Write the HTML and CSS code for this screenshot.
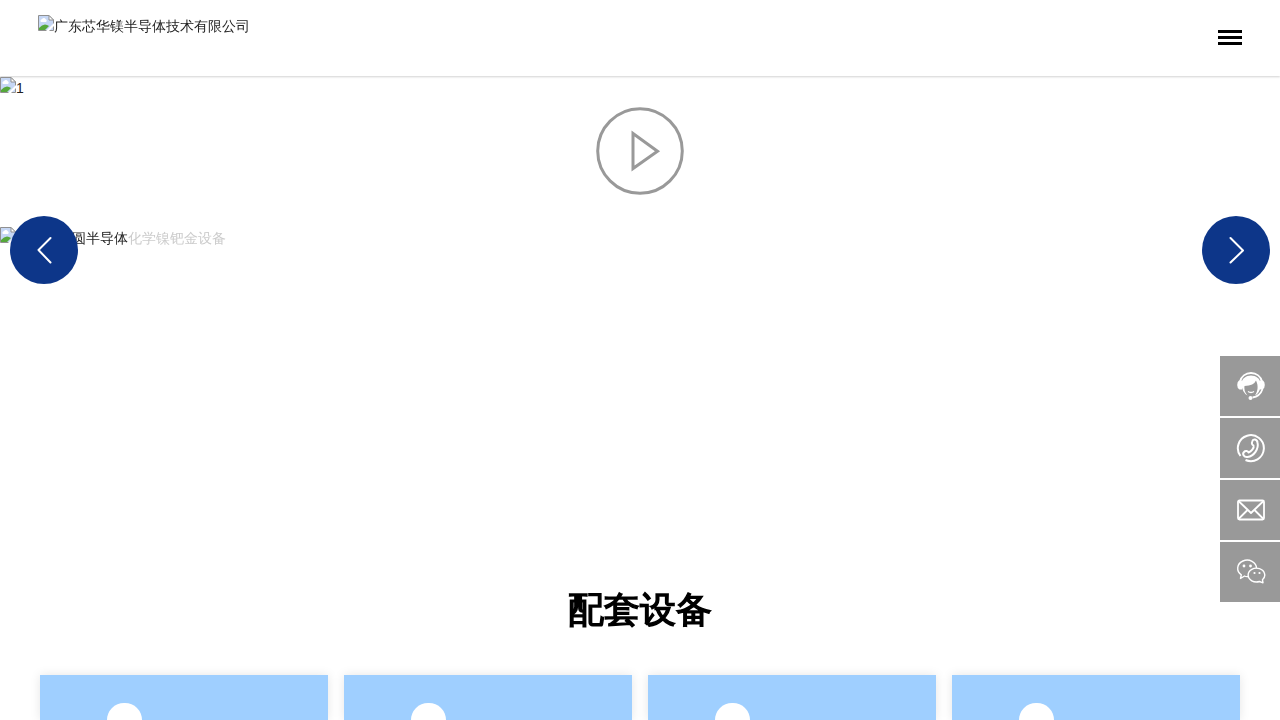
FILE: index.html
```
<!DOCTYPE html>
<html lang="zh-CN">
<head>
    <meta charset="UTF-8">
    <meta name="viewport" content="width=device-width, initial-scale=1.0">
    <title>广东芯华镁半导体技术有限公司</title>
    <link rel="stylesheet" href="styles.css">
</head>
<body>
    <!-- 图片占位图标 -->
    <svg class="symbols">
        <symbol id="noimg" viewBox="0 0 16 16">
            <path d="M.5 .5H11L15.500 5V15.500H.5Z" fill="#c6d7f5" stroke="#909090"/>
            <path d="M11 .5V5H15.500Z" fill="#fff" stroke="#909090"/>
            <path d="M3 7a1.500 1.500 0 0 1 1-2.700 2 2 0 0 1 3.700 0A1.500 1.500 0 0 1 8 7Z" fill="#fff"/>
            <path d="M1 15V13Q6 7 11 11L7 15Z" fill="#55a83a"/>
            <path d="M8 16L16 8V11L11 16Z" fill="#fff"/>
        </symbol>
    </svg>
    <header class="header">
        <a href="#" class="logo"><svg class="noimg"><use href="#noimg"/></svg><span>广东芯华镁半导体技术有限公司</span></a>
        <a href="#" class="menu"><i></i><i></i><i></i></a>
    </header>
    <div class="banner">
        <div class="slide">
            <div class="pic"><svg class="noimg"><use href="#noimg"/></svg><span>1</span></div>
            <svg class="play" viewBox="0 0 88 88" fill="none" stroke="#999" stroke-width="3">
                <circle cx="44" cy="44" r="42.300"/>
                <path d="M37 26.500V61.500L61.500 44.200Z"/>
            </svg>
        </div>
        <div class="slide">
            <div class="pic"><svg class="noimg"><use href="#noimg"/></svg><span class="name">晶圆半导体</span><span class="gray">化学镍钯金设备</span></div>
        </div>
        <span class="prev"><svg viewBox="0 0 68 68"><path d="M40.500 22L28.500 34L40.500 46.500"/></svg></span>
        <span class="next"><svg viewBox="0 0 68 68"><path d="M28.500 22L41 34.500L28.500 46.500"/></svg></span>
    </div>
    <section class="equip">
        <h2>配套设备</h2>
        <ul>
            <li><i></i></li>
            <li><i></i></li>
            <li><i></i></li>
            <li><i></i></li>
        </ul>
    </section>
    <nav class="side">
        <a href="#">
            <svg viewBox="0 0 30 30">
                <path class="line" d="M4 10.500a11.200 10.500 0 0 1 22 0M26.500 18q-2.500 7.500-10 8.500"/>
                <path class="fill" d="M3 9.500H6V18.500H3.500Q1.200 17.500 1.200 14T3 9.500ZM24 9.500H27Q28.800 10.500 28.800 14T26.500 18.500H24Z"/>
                <path class="fill" d="M5.500 13C5.500 1.500 24.500 1.500 24.500 13C25 18.500 22.500 22.500 19 24.500C22 20 22.500 14.500 20 9.500Q18 14.500 8.500 15Q7.500 20 11.500 24.500Q6 21.500 5.500 13Z"/>
                <path class="line thin" d="M12 20.500q3 2 6 0"/>
                <circle class="fill" cx="14.500" cy="27" r="2"/>
            </svg>
        </a>
        <a href="#">
            <svg viewBox="0 0 30 30">
                <path class="line thick" d="M4.500 23A13 13 0 1 1 9.500 27"/>
                <path class="line thick" d="M16.200 8.500C17 5.500 21 6 21.500 9.500C23 16 18 23 11.500 24C8 24.500 6 21 8 19C9.500 17.200 12 18 12.500 19.500C15 18.500 18.500 15 17.500 12.500C16 12 15.500 10.500 16.200 8.500Z"/>
            </svg>
        </a>
        <a href="#">
            <svg viewBox="0 0 30 30">
                <rect class="line" x="2" y="5.500" width="26" height="19" rx="1.500"/>
                <path class="line" d="M2.500 6L15 18L27.500 6M2.500 24L11.500 15M27.500 24L18.500 15"/>
            </svg>
        </a>
        <a href="#">
            <svg viewBox="0 0 30 30">
                <path class="line thin" d="M12.300 19.500Q10 19.800 8.500 19L4.500 21.500L5.300 17.800A9.400 8.200 0 1 1 20.500 11.300"/>
                <path class="line thin" d="M26.500 22.800A8.300 6.900 0 1 0 23.500 24.500L27 25.800Z"/>
                <circle class="fill" cx="8" cy="9" r="1.400"/><circle class="fill" cx="14.500" cy="9" r="1.400"/>
                <circle class="fill" cx="18.500" cy="16" r="1.100"/><circle class="fill" cx="23.500" cy="16" r="1.100"/>
            </svg>
        </a>
    </nav>
</body>
</html>
```
FILE: styles.css
```
body,ul,li,h2 { margin: 0; padding: 0; }
body { height: 720px; overflow: hidden; background: #fff; color: #222; font: 14px/22px "Liberation Sans", "WenQuanYi Zen Hei", "Droid Sans Fallback", "Noto Sans CJK SC", sans-serif; }
ul,li { list-style: none; }
a { color: inherit; text-decoration: none; }
.symbols { display: none; }
.noimg { width: 16px; height: 16px; flex: none; }
.header { height: 76px; box-sizing: border-box; padding: 15px 38px 0; display: flex; justify-content: space-between; align-items: flex-start; box-shadow: 0 1px 2px rgba(0,0,0,.18); }
.logo,.pic { display: flex; align-items: flex-start; }
.menu { width: 24px; margin-top: 15px; display: flex; flex-direction: column; gap: 3px; }
.menu i { height: 3px; background: #000; }
/* 轮播 */
.banner { height: 473px; padding-top: 1px; position: relative; }
.slide { height: 150px; }
.play { width: 88px; height: 88px; display: block; margin: 8px auto 0; }
.name { padding-left: 42px; }
.gray { color: #ccc; }
.prev,.next { width: 68px; height: 68px; position: absolute; top: 140px; background: #0d3689; border-radius: 50%; }
.prev { left: 10px; }
.next { right: 10px; }
.prev svg,.next svg { display: block; fill: none; stroke: #fff; stroke-width: 2; stroke-linecap: round; stroke-linejoin: round; }
/* 配套设备 */
.equip { height: 170px; box-sizing: border-box; padding: 35px 40px 0; overflow: hidden; }
.equip h2 { height: 90px; line-height: 50px; text-align: center; font-size: 36px; font-weight: bold; color: #000; -webkit-text-stroke: 1.5px #000; }
.equip ul { display: grid; grid-template-columns: repeat(4, 1fr); gap: 16px; }
.equip li { height: 45px; box-sizing: border-box; padding: 28px 0 0 67px; background: #9fcfff; box-shadow: 0 0 10px rgba(0,0,0,.1); }
.equip li i { display: block; width: 35px; height: 17px; border-radius: 17.5px 17.5px 0 0; background: #fff; }
/* 右侧悬浮栏 */
.side { position: fixed; right: 0; top: 356px; display: flex; flex-direction: column; gap: 2px; }
.side a { width: 60px; height: 60px; display: flex; align-items: center; justify-content: center; background: #999; }
.side svg { width: 30px; height: 30px; margin-left: 2px; }
.side .line { fill: none; stroke: #fff; stroke-width: 1.800; stroke-linejoin: round; }
.side .thin { stroke-width: 1.400; }
.side .thick { stroke-width: 2; }
.side .fill { fill: #fff; }
```
